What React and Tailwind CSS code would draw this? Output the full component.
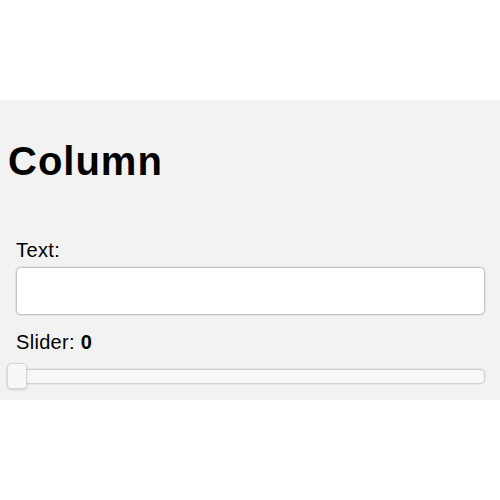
import React, { useState } from 'react';

export default function App() {
  const [text, setText] = useState('');
  const [value] = useState(0);

  return (
    <div className="h-[500px] w-[500px] bg-white pt-[100px] text-black" style={{ fontFamily: '"Liberation Sans", Arial, sans-serif' }}>
      <div className="flex h-[300px] flex-col bg-[#f2f2f2]">
        {/* Heading */}
        <h1 className="ml-[8px] mt-[38px] text-[40px] font-bold leading-[46px] tracking-[1px]">Column</h1>

        {/* Text field */}
        <label className="ml-[16px] mt-[55px] text-[20px] leading-[23px] tracking-[0.4px]">Text:</label>
        <input
          type="text"
          value={text}
          onChange={(e) => setText(e.target.value)}
          className="ml-[16px] mt-[5px] h-[48px] w-[469px] rounded-[5px] border border-[#c6c6c6] bg-white px-2 text-[20px] shadow-[0_0_0_1px_#e2e2e2] outline-none"
        />

        {/* Slider */}
        <div className="ml-[16px] mt-[16px] text-[20px] leading-[23px] tracking-[0.3px]">
          Slider: <b>{value}</b>
        </div>
        <div className="relative ml-[7px] mt-[9px] flex h-[26px] w-[478px] items-center">
          <div className="h-[15px] w-full rounded-[5px] border border-[#cfcfcf] bg-[#f7f7f7] shadow-[0_0_0_1px_#e6e6e6]" />
          <div className="absolute left-0 top-0 h-[26px] w-[20px] rounded-[4px] border border-[#d6d6d6] bg-[#f8f8f8] shadow-[0_1px_2px_rgba(0,0,0,0.15)]" />
        </div>
      </div>
    </div>
  );
}
